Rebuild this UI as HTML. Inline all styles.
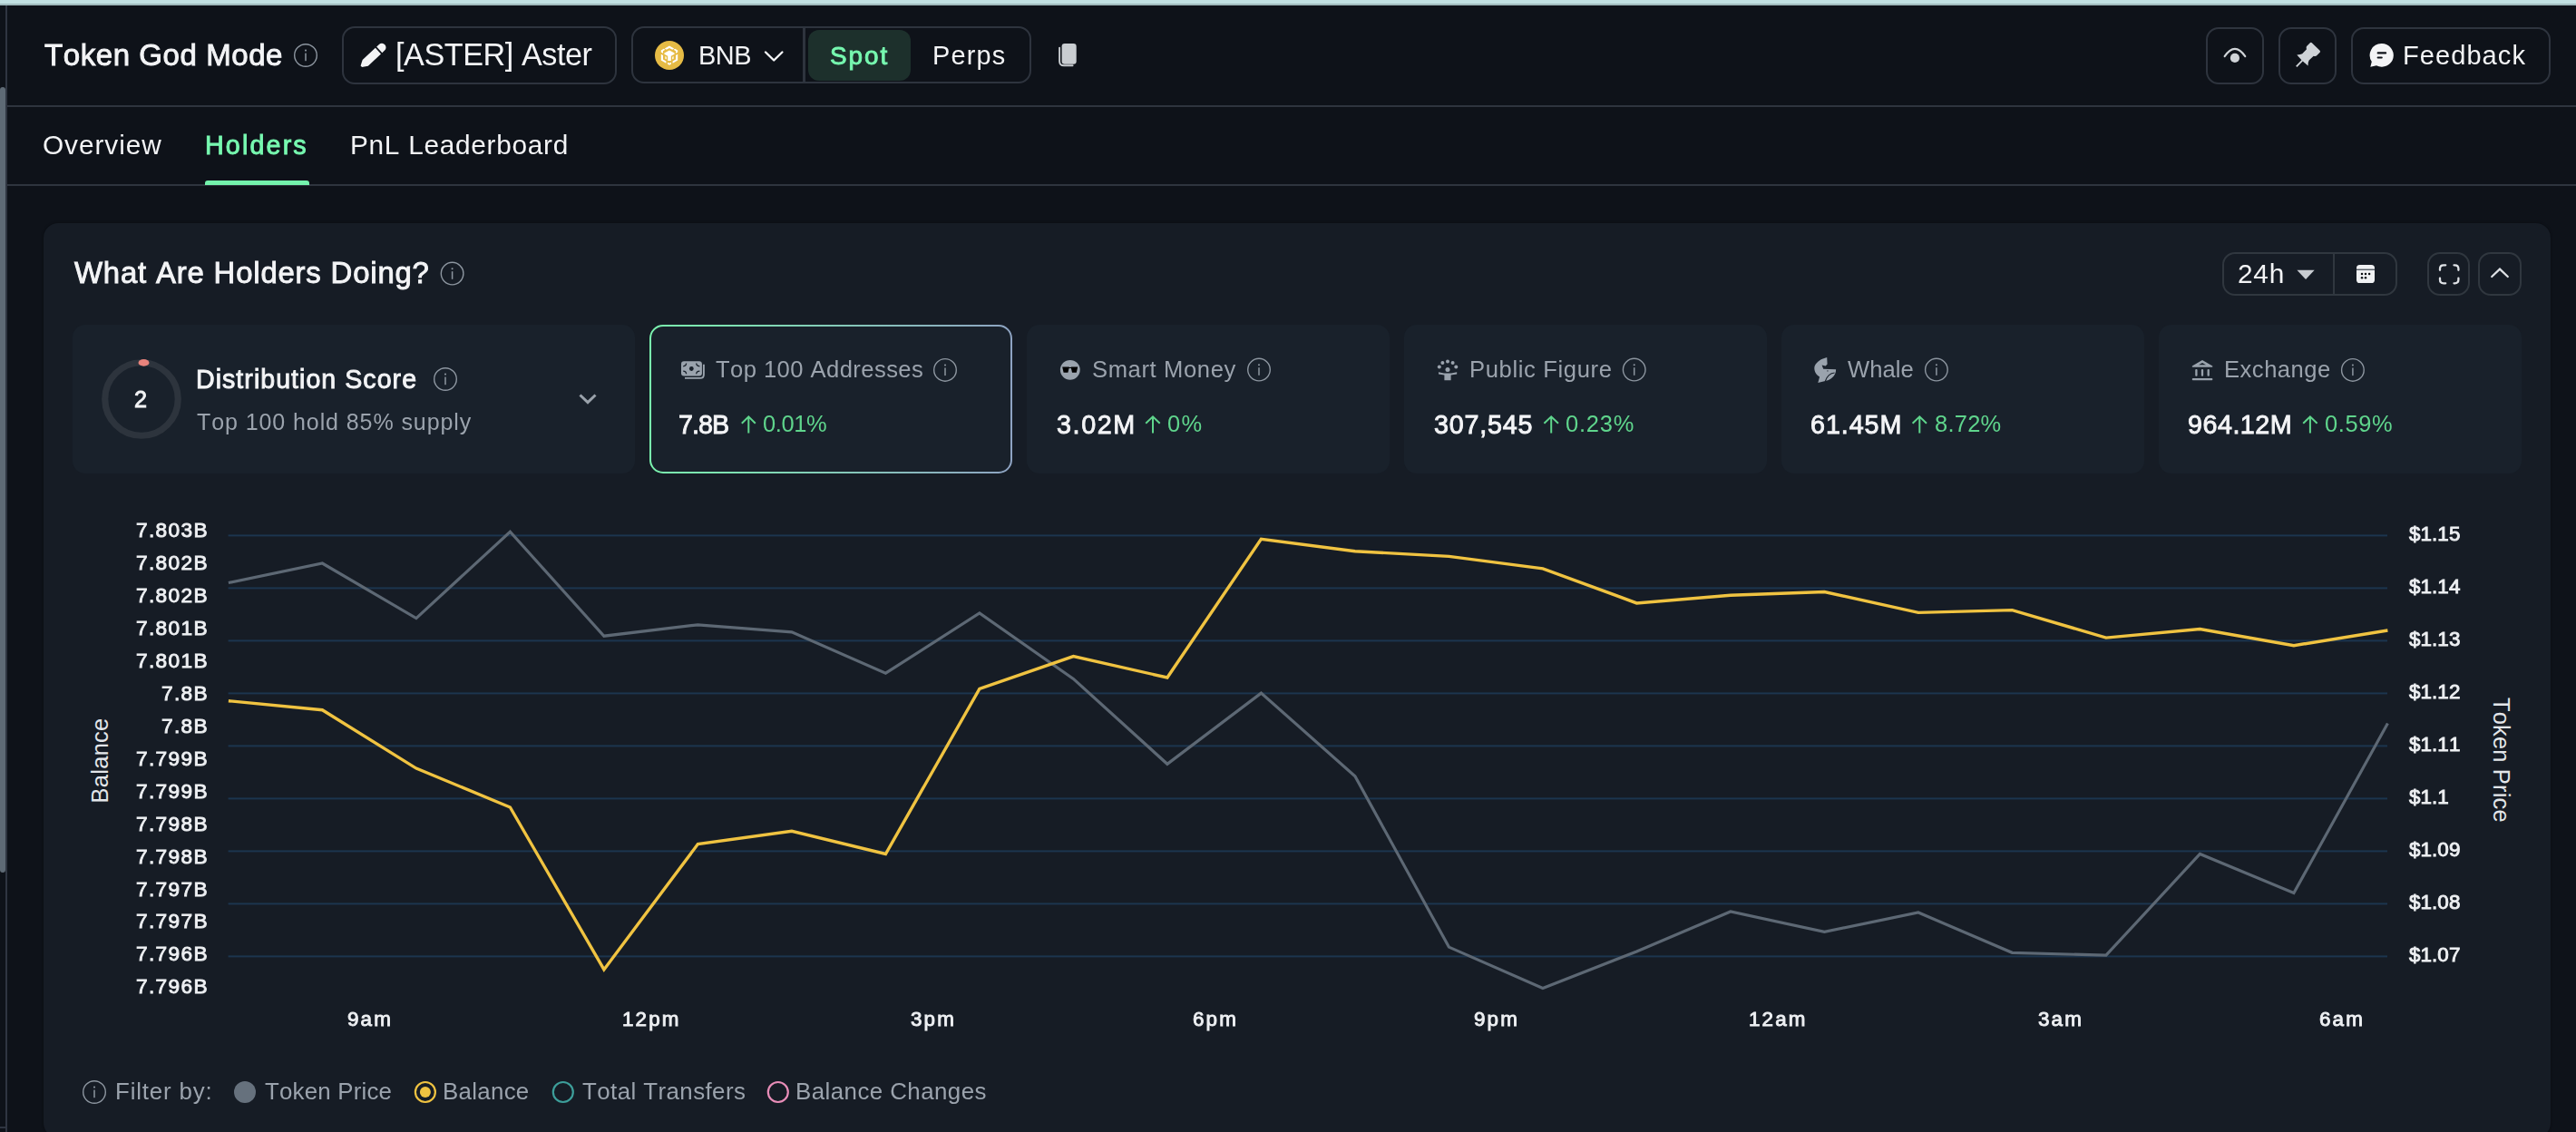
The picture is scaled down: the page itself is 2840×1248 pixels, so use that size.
<!DOCTYPE html>
<html><head><meta charset="utf-8"><style>
html,body{margin:0;padding:0;}
body{width:2840px;height:1248px;background:#0e1219;position:relative;overflow:hidden;font-family:'Liberation Sans',sans-serif;}
.t{position:absolute;white-space:nowrap;font-kerning:none;will-change:transform;font-family:'Liberation Sans',sans-serif;}
.a{position:absolute;box-sizing:border-box;}
</style></head><body>
<div class="a" style="left:0;top:0;width:2840px;height:4px;background:#c1e0e2"></div>
<div class="a" style="left:0;top:4px;width:2840px;height:1px;background:#9bb4b7"></div>
<div class="a" style="left:0;top:5px;width:2840px;height:1px;background:#a6c0c3"></div>
<div class="a" style="left:6px;top:6px;width:2px;height:1242px;background:#2f3541"></div>
<div class="a" style="left:0;top:1242px;width:6px;height:2px;background:#2f3541"></div>
<div class="a" style="left:0;top:96px;width:6px;height:866px;background:#5e6a75;border-radius:5px"></div>
<div class="a" style="left:8px;top:116px;width:2832px;height:2px;background:#2e343e"></div>
<div class="a" style="left:8px;top:203px;width:2832px;height:2px;background:#2e343e"></div>
<div class="a" style="left:225.5px;top:199px;width:115.5px;height:5px;background:#74f2ac;border-radius:3px 3px 0 0"></div>
<!-- header buttons -->
<div class="a" style="left:377px;top:29px;width:303px;height:64px;border:2px solid #2e343e;border-radius:14px"></div>
<div class="a" style="left:696px;top:29px;width:441px;height:63px;border:2px solid #2e343e;border-radius:14px"></div>
<div class="a" style="left:885px;top:31px;width:3px;height:59px;background:#2e343e"></div>
<div class="a" style="left:891px;top:33px;width:113px;height:56px;background:#1d302c;border-radius:12px"></div>
<div class="a" style="left:2432px;top:29.5px;width:64px;height:63px;border:2px solid #2e343e;border-radius:14px"></div>
<div class="a" style="left:2512px;top:29.5px;width:64px;height:63px;border:2px solid #2e343e;border-radius:14px"></div>
<div class="a" style="left:2592px;top:29.5px;width:220px;height:63px;border:2px solid #2e343e;border-radius:14px"></div>
<!-- main card -->
<div class="a" style="left:48px;top:246px;width:2764px;height:1008px;background:#161c25;border-radius:16px;box-shadow:0 0 3px rgba(0,0,0,0.4)"></div>
<div class="a" style="left:2450px;top:278.3px;width:193.4px;height:47.3px;border:2px solid #30373f;border-radius:14px"></div>
<div class="a" style="left:2572px;top:280px;width:2px;height:44px;background:#30373f"></div>
<div class="a" style="left:2676px;top:278.3px;width:47px;height:47.3px;border:2px solid #30373f;border-radius:14px"></div>
<div class="a" style="left:2732px;top:278.3px;width:47.5px;height:47.3px;border:2px solid #30373f;border-radius:14px"></div>
<!-- metric cards -->
<div class="a" style="left:80px;top:358px;width:620px;height:163.5px;background:#19212b;border-radius:14px"></div>
<div class="a" style="left:1132px;top:358px;width:400px;height:163.5px;background:#19212b;border-radius:14px"></div>
<div class="a" style="left:1548px;top:358px;width:400px;height:163.5px;background:#19212b;border-radius:14px"></div>
<div class="a" style="left:1964px;top:358px;width:400px;height:163.5px;background:#19212b;border-radius:14px"></div>
<div class="a" style="left:2380px;top:358px;width:400px;height:163.5px;background:#19212b;border-radius:14px"></div>
<svg class="a" style="left:0;top:0" width="2840" height="1248" viewBox="0 0 2840 1248">
<defs><linearGradient id="gb" x1="0" x2="1" y1="0" y2="0"><stop offset="0" stop-color="#7af3ae"/><stop offset="1" stop-color="#8ea3c2"/></linearGradient></defs>
<rect x="717" y="359" width="398" height="162" rx="14" fill="#19212b" stroke="url(#gb)" stroke-width="2"/>
<rect x="251.6" y="589.4" width="2380.4" height="2" fill="#1c354f"/><rect x="251.6" y="647.4" width="2380.4" height="2" fill="#1c354f"/><rect x="251.6" y="705.4" width="2380.4" height="2" fill="#1c354f"/><rect x="251.6" y="763.4" width="2380.4" height="2" fill="#1c354f"/><rect x="251.6" y="821.4" width="2380.4" height="2" fill="#1c354f"/><rect x="251.6" y="879.4" width="2380.4" height="2" fill="#1c354f"/><rect x="251.6" y="937.4" width="2380.4" height="2" fill="#1c354f"/><rect x="251.6" y="995.4" width="2380.4" height="2" fill="#1c354f"/><rect x="251.6" y="1053.4" width="2380.4" height="2" fill="#1c354f"/><polyline points="251.9,642.5 355.4,621.0 458.9,681.6 562.4,586.2 665.9,701.2 769.4,688.8 872.9,696.9 976.4,742.2 1079.9,675.9 1183.4,748.4 1286.9,842.3 1390.4,764.1 1493.9,855.7 1597.4,1044.1 1700.9,1089.4 1804.4,1048.9 1907.9,1005.0 2011.4,1027.4 2114.9,1006.0 2218.4,1050.3 2321.9,1053.2 2425.4,941.5 2528.9,984.5 2632.4,797.5" fill="none" stroke="#5d6874" stroke-width="3.2" stroke-linejoin="miter"/><polyline points="251.9,772.7 355.4,782.7 458.9,847.1 562.4,890.0 665.9,1068.9 769.4,930.6 872.9,916.3 976.4,941.5 1079.9,759.4 1183.4,723.6 1286.9,747.0 1390.4,594.4 1493.9,607.7 1597.4,613.4 1700.9,626.8 1804.4,664.9 1907.9,656.3 2011.4,652.5 2114.9,675.4 2218.4,672.6 2321.9,703.1 2425.4,693.5 2528.9,711.7 2632.4,695.0" fill="none" stroke="#f0c341" stroke-width="3.4" stroke-linejoin="miter"/><circle cx="337" cy="61" r="12.3" fill="none" stroke="#8d96a0" stroke-width="1.4"/><rect x="336.25" y="58.60" width="1.5" height="8.6" fill="#8d96a0"/><circle cx="337" cy="55.60" r="1.05" fill="#8d96a0"/><circle cx="498.6" cy="301.6" r="12.3" fill="none" stroke="#8d96a0" stroke-width="1.4"/><rect x="497.85" y="299.20" width="1.5" height="8.6" fill="#8d96a0"/><circle cx="498.6" cy="296.20" r="1.05" fill="#8d96a0"/><circle cx="491" cy="418" r="12.3" fill="none" stroke="#8d96a0" stroke-width="1.4"/><rect x="490.25" y="415.60" width="1.5" height="8.6" fill="#8d96a0"/><circle cx="491" cy="412.60" r="1.05" fill="#8d96a0"/><circle cx="1042" cy="407.9" r="12.3" fill="none" stroke="#8d96a0" stroke-width="1.4"/><rect x="1041.25" y="405.50" width="1.5" height="8.6" fill="#8d96a0"/><circle cx="1042" cy="402.50" r="1.05" fill="#8d96a0"/><circle cx="1388" cy="407.6" r="12.3" fill="none" stroke="#8d96a0" stroke-width="1.4"/><rect x="1387.25" y="405.20" width="1.5" height="8.6" fill="#8d96a0"/><circle cx="1388" cy="402.20" r="1.05" fill="#8d96a0"/><circle cx="1801.7" cy="407.6" r="12.3" fill="none" stroke="#8d96a0" stroke-width="1.4"/><rect x="1800.95" y="405.20" width="1.5" height="8.6" fill="#8d96a0"/><circle cx="1801.7" cy="402.20" r="1.05" fill="#8d96a0"/><circle cx="2134.9" cy="407.6" r="12.3" fill="none" stroke="#8d96a0" stroke-width="1.4"/><rect x="2134.15" y="405.20" width="1.5" height="8.6" fill="#8d96a0"/><circle cx="2134.9" cy="402.20" r="1.05" fill="#8d96a0"/><circle cx="2593.9" cy="407.9" r="12.3" fill="none" stroke="#8d96a0" stroke-width="1.4"/><rect x="2593.15" y="405.50" width="1.5" height="8.6" fill="#8d96a0"/><circle cx="2593.9" cy="402.50" r="1.05" fill="#8d96a0"/><circle cx="104" cy="1204" r="12.3" fill="none" stroke="#8d96a0" stroke-width="1.4"/><rect x="103.25" y="1201.60" width="1.5" height="8.6" fill="#8d96a0"/><circle cx="104" cy="1198.60" r="1.05" fill="#8d96a0"/><g transform="translate(398.2,73.6) rotate(-43)"><path d="M0.3,-1.2 L6.2,-4.5 L25.6,-4.5 L25.6,4.5 L6.2,4.5 L1.4,1.6 Q-0.2,0.6 0.3,-1.2 Z" fill="#f3f4f6"/><path d="M27.4,-4.5 L31.2,-4.5 A4.5,4.5 0 0 1 31.2,4.5 L27.4,4.5 Z" fill="#f3f4f6"/></g><circle cx="738" cy="61" r="16" fill="#e6bb45"/><g transform="translate(738,61)" fill="#ffffff"><path d="M-5.2,-7.4 L0,-10.4 L5.2,-7.4 L3.2,-6.2 L0,-8.0 L-3.2,-6.2 Z"/><path d="M-9.2,-5.6 L-6.2,-7.2 L-4.6,-6.2 L-7.0,-4.8 L-7.0,-2.2 L-9.2,-3.4 Z"/><path d="M9.2,-5.6 L6.2,-7.2 L4.6,-6.2 L7.0,-4.8 L7.0,-2.2 L9.2,-3.4 Z"/><path d="M-5.6,-2.6 L0,-5.6 L5.6,-2.6 L5.6,-1.2 L1.8,0.8 L1.8,6.0 L-1.8,6.0 L-1.8,0.8 L-5.6,-1.2 Z"/><path d="M-9.2,-1.2 L-7.0,0 L-7.0,4.6 L-3.6,6.6 L-3.6,8.8 L-9.2,5.6 Z"/><path d="M9.2,-1.2 L7.0,0 L7.0,4.6 L3.6,6.6 L3.6,8.8 L9.2,5.6 Z"/><path d="M-1.9,7.8 L0,8.8 L1.9,7.8 L1.9,9.8 L0,10.8 L-1.9,9.8 Z"/><path d="M-4.6,1.0 L-3.2,1.8 L-3.2,4.6 L-4.6,3.8 Z"/><path d="M4.6,1.0 L3.2,1.8 L3.2,4.6 L4.6,3.8 Z"/></g><path d="M844,57.5 L853.2,66.5 L862.4,57.5" fill="none" stroke="#f3f4f6" stroke-width="2.4" stroke-linecap="round" stroke-linejoin="round"/><rect x="1170.6" y="48" width="16.1" height="22.8" rx="3.2" fill="#c9cdd1"/><path d="M1168.1,52.6 L1168.1,67.5 Q1168.1,72.3 1173,72.3 L1182.6,72.3" fill="none" stroke="#c9cdd1" stroke-width="1.9" stroke-linecap="round"/><path d="M2452.6,62.2 Q2463.9,45.5 2475.3,62.2" fill="none" stroke="#d0d4d8" stroke-width="2.1" stroke-linecap="round"/><circle cx="2463.9" cy="63.9" r="5.1" fill="#d0d4d8"/><g transform="translate(2531.8,73.3) rotate(-45.6)" fill="#cfd3d7"><path d="M9.5,-8.6 Q12.5,-5.6 14.5,-5.2 L21.5,-5.4 Q22.6,-7.6 24.2,-7.6 L28.8,-7.6 Q30.6,-7.6 30.6,-5.8 L30.6,5.8 Q30.6,7.6 28.8,7.6 L24.2,7.6 Q22.6,7.6 21.5,5.4 L14.5,5.2 Q12.5,5.6 9.5,8.6 Q8.6,0 9.5,-8.6 Z"/><rect x="0" y="-0.95" width="10" height="1.9"/></g><path d="M2625.8,48.1 A12.8,12.8 0 1 1 2620,72.2 L2613.3,73.8 L2614.8,68 A12.8,12.8 0 0 1 2625.8,48.1 Z" fill="#f3f4f6"/><rect x="2620.6" y="57.3" width="10.6" height="2.2" rx="1.1" fill="#0e1219"/><rect x="2620.6" y="62.4" width="6.2" height="2.2" rx="1.1" fill="#0e1219"/><path d="M2532.4,297.8 L2551.7,297.8 L2542.05,308 Z" fill="#c8ccd1"/><rect x="2598" y="292" width="20" height="20" rx="3.6" fill="#f0f1f3"/><rect x="2598" y="296.6" width="20" height="1.3" fill="#4a5059"/><circle cx="2604" cy="302" r="1.25" fill="#0b0e12"/><circle cx="2608" cy="302" r="1.25" fill="#0b0e12"/><circle cx="2612.1" cy="302" r="1.25" fill="#0b0e12"/><circle cx="2604" cy="306.3" r="1.25" fill="#0b0e12"/><circle cx="2608" cy="306.3" r="1.25" fill="#0b0e12"/><path d="M2690,297.8 L2690,296.3 Q2690,292.3 2694,292.3 L2696.2,292.3 M2705.5,292.3 L2706.4,292.3 Q2710.4,292.3 2710.4,296.3 L2710.4,297.8 M2710.4,306.7 L2710.4,308.3 Q2710.4,312.3 2706.4,312.3 L2705.5,312.3 M2696.2,312.3 L2694,312.3 Q2690,312.3 2690,308.3 L2690,306.7" fill="none" stroke="#dfe2e6" stroke-width="2.3" stroke-linecap="round"/><path d="M2747.2,305 L2756,296.6 L2764.8,305" fill="none" stroke="#dfe2e6" stroke-width="2.2" stroke-linecap="round" stroke-linejoin="miter"/><circle cx="156" cy="440" r="40.25" fill="none" stroke="#2d343d" stroke-width="7.2"/><ellipse cx="158.5" cy="399.9" rx="6" ry="3.8" fill="#e8837c"/><path d="M639.5,435.5 L648,443.6 L656.5,435.5" fill="none" stroke="#9aa2ab" stroke-width="3" stroke-linecap="butt" stroke-linejoin="miter"/><rect x="751" y="398.2" width="22.9" height="16.4" rx="3" fill="#9aa3ad"/><circle cx="762.3" cy="406.5" r="2.4" fill="#19212b"/><path d="M756.6,400.6 Q756.6,403.6 753.2,403.8 M767.7,400.6 Q767.7,403.6 771.4,403.8 M756.6,412.3 Q756.6,409.2 753.2,409.1 M767.7,412.3 Q767.7,409.2 771.4,409.1" fill="none" stroke="#19212b" stroke-width="1.3"/><path d="M775.9,401.8 L775.9,413 Q775.9,416.9 772,416.9 L755,416.9" fill="none" stroke="#9aa3ad" stroke-width="1.9"/><circle cx="1179.8" cy="407.8" r="10.9" fill="#9aa3ad"/><path d="M1171.2,404.6 L1178.9,404.6 L1177.4,410.8 L1172.6,410.8 Z M1180.6,404.6 L1188.2,404.6 L1186.8,410.8 L1182,410.8 Z M1178.5,405 L1181,405 L1181,405.9 L1178.5,405.9 Z" fill="#000"/><circle cx="1586.8" cy="404.6" r="2.0" fill="#9aa3ad"/><circle cx="1590.4" cy="400.0" r="2.0" fill="#9aa3ad"/><circle cx="1596" cy="398.6" r="2.0" fill="#9aa3ad"/><circle cx="1601.6" cy="400.0" r="2.0" fill="#9aa3ad"/><circle cx="1605.3" cy="404.6" r="2.0" fill="#9aa3ad"/><circle cx="1596" cy="407.4" r="2.5" fill="#9aa3ad"/><path d="M1586,410.3 L1592,411.4 L1600,411.4 L1606.2,410.3 L1606.2,412.6 L1599.6,413.4 L1599.6,419.2 L1592.4,419.2 L1592.4,413.4 L1586,412.6 Z" fill="#9aa3ad"/><g transform="translate(1995,390)"><path d="M19.2,4 L19.6,11.6 L17.6,13.6 L13.6,12.4 L15.2,16.7 L29.1,17.2 C29.2,22.5 25.8,27.6 18.4,29.8 L9.3,31.9 L11.1,25.6 C6.2,22.4 4.6,17.6 5.6,13.8 C8,8.2 13,5.6 19.2,4 Z" fill="#9aa3ad"/><path d="M17.4,30.2 C19.5,24 22.5,21.4 27.6,21" fill="none" stroke="#19212b" stroke-width="1.2"/><rect x="19.2" y="18.2" width="1.4" height="1.4" fill="#4a525c"/></g><path d="M2428,397 L2439.3,403.4 Q2439.8,404.7 2438.4,404.7 L2417.7,404.7 Q2416.3,404.7 2416.8,403.4 Z" fill="#9aa3ad"/><path d="M2428,400 L2432,402.3 L2424,402.3 Z" fill="#19212b"/><rect x="2420.25" y="407.1" width="2.3" height="7.6" rx="1" fill="#9aa3ad"/><rect x="2426.85" y="407.1" width="2.3" height="7.6" rx="1" fill="#9aa3ad"/><rect x="2433.55" y="407.1" width="2.3" height="7.6" rx="1" fill="#9aa3ad"/><rect x="2416.8" y="417" width="22.5" height="2.3" rx="0.8" fill="#9aa3ad"/><path d="M825.3,477.5 L825.3,459.3 M817.8,466.8 L825.3,459.3 L832.8,466.8" fill="none" stroke="#5fd58c" stroke-width="2" stroke-linecap="butt" stroke-linejoin="miter"/><path d="M1271.0,477.5 L1271.0,459.3 M1263.2,466.8 L1271.0,459.3 L1278.7,466.8" fill="none" stroke="#5fd58c" stroke-width="2" stroke-linecap="butt" stroke-linejoin="miter"/><path d="M1710.2,477.5 L1710.2,459.3 M1702.4,466.8 L1710.2,459.3 L1718.0,466.8" fill="none" stroke="#5fd58c" stroke-width="2" stroke-linecap="butt" stroke-linejoin="miter"/><path d="M2116.3,477.5 L2116.3,459.3 M2108.6,466.8 L2116.3,459.3 L2124.0,466.8" fill="none" stroke="#5fd58c" stroke-width="2" stroke-linecap="butt" stroke-linejoin="miter"/><path d="M2546.9,477.5 L2546.9,459.3 M2539.2,466.8 L2546.9,459.3 L2554.6,466.8" fill="none" stroke="#5fd58c" stroke-width="2" stroke-linecap="butt" stroke-linejoin="miter"/><circle cx="270" cy="1204" r="12" fill="#66717d"/><circle cx="468.9" cy="1204" r="11" fill="none" stroke="#f0c341" stroke-width="2.2"/><circle cx="468.9" cy="1204" r="6" fill="#f0c341"/><circle cx="620.8" cy="1204" r="11" fill="none" stroke="#3d9e9a" stroke-width="2.2"/><circle cx="857.8" cy="1204" r="11" fill="none" stroke="#e88db8" stroke-width="2.2"/><text transform="translate(118.8,885.4) rotate(-90)" font-family="Liberation Sans" font-size="25.44" letter-spacing="0.283" fill="#e3e6ea" style="font-kerning:none">Balance</text><text transform="translate(2748.7,768.9) rotate(90)" font-family="Liberation Sans" font-size="25.44" letter-spacing="0.200" fill="#e3e6ea" style="font-kerning:none">Token Price</text>
</svg>
<div class="t" style="left:49.30px;top:44.00px;font-size:33.05px;line-height:33.05px;font-weight:400;-webkit-text-stroke:0.900px #f3f4f6;letter-spacing:0.546px;color:#f3f4f6">Token God Mode</div><div class="t" style="left:435.60px;top:43.00px;font-size:34.16px;line-height:34.16px;font-weight:400;letter-spacing:-0.425px;color:#f3f4f6">[ASTER] Aster</div><div class="t" style="left:769.90px;top:47.00px;font-size:28.92px;line-height:28.92px;font-weight:400;letter-spacing:-0.450px;color:#f3f4f6">BNB</div><div class="t" style="left:915.40px;top:48.00px;font-size:27.87px;line-height:27.87px;font-weight:400;-webkit-text-stroke:0.900px #77f8b0;letter-spacing:2.000px;color:#77f8b0">Spot</div><div class="t" style="left:1027.70px;top:47.00px;font-size:28.92px;line-height:28.92px;font-weight:400;letter-spacing:1.200px;color:#f3f4f6">Perps</div><div class="t" style="left:2649.00px;top:47.00px;font-size:29.07px;line-height:29.07px;font-weight:400;letter-spacing:1.043px;color:#f3f4f6">Feedback</div><div class="t" style="left:47.40px;top:145.00px;font-size:29.80px;line-height:29.80px;font-weight:400;letter-spacing:0.943px;color:#f3f4f6">Overview</div><div class="t" style="left:226.00px;top:146.00px;font-size:28.71px;line-height:28.71px;font-weight:400;-webkit-text-stroke:0.900px #77f8b0;letter-spacing:2.133px;color:#77f8b0">Holders</div><div class="t" style="left:386.00px;top:145.00px;font-size:29.80px;line-height:29.80px;font-weight:400;letter-spacing:0.714px;color:#f3f4f6">PnL Leaderboard</div><div class="t" style="left:82.00px;top:285.00px;font-size:32.91px;line-height:32.91px;font-weight:400;-webkit-text-stroke:0.900px #f3f4f6;letter-spacing:0.809px;color:#f3f4f6">What Are Holders Doing?</div><div class="t" style="left:2466.50px;top:287.00px;font-size:29.80px;line-height:29.80px;font-weight:400;letter-spacing:0.800px;color:#f3f4f6">24h</div><div class="t" style="left:148.40px;top:428.00px;font-size:25.21px;line-height:25.21px;font-weight:400;-webkit-text-stroke:0.900px #f3f4f6;letter-spacing:0.000px;color:#f3f4f6">2</div><div class="t" style="left:215.80px;top:404.00px;font-size:28.57px;line-height:28.57px;font-weight:400;-webkit-text-stroke:0.900px #f3f4f6;letter-spacing:1.035px;color:#f3f4f6">Distribution Score</div><div class="t" style="left:216.80px;top:453.00px;font-size:25.00px;line-height:25.00px;font-weight:400;letter-spacing:0.914px;color:#9ba3ad">Top 100 hold 85% supply</div><div class="t" style="left:789.00px;top:395.00px;font-size:25.58px;line-height:25.58px;font-weight:400;letter-spacing:0.438px;color:#9ba3ad">Top 100 Addresses</div><div class="t" style="left:747.60px;top:454.00px;font-size:28.71px;line-height:28.71px;font-weight:400;-webkit-text-stroke:0.900px #f3f4f6;letter-spacing:-1.000px;color:#f3f4f6">7.8B</div><div class="t" style="left:841.00px;top:455.00px;font-size:25.44px;line-height:25.44px;font-weight:400;letter-spacing:-0.350px;color:#5fd58c">0.01%</div><div class="t" style="left:1204.30px;top:395.00px;font-size:25.58px;line-height:25.58px;font-weight:400;letter-spacing:0.620px;color:#9ba3ad">Smart Money</div><div class="t" style="left:1165.10px;top:454.00px;font-size:28.71px;line-height:28.71px;font-weight:400;-webkit-text-stroke:0.900px #f3f4f6;letter-spacing:1.625px;color:#f3f4f6">3.02M</div><div class="t" style="left:1287.00px;top:455.00px;font-size:25.44px;line-height:25.44px;font-weight:400;letter-spacing:1.300px;color:#5fd58c">0%</div><div class="t" style="left:1619.80px;top:395.00px;font-size:25.58px;line-height:25.58px;font-weight:400;letter-spacing:0.633px;color:#9ba3ad">Public Figure</div><div class="t" style="left:1581.00px;top:454.00px;font-size:28.71px;line-height:28.71px;font-weight:400;-webkit-text-stroke:0.900px #f3f4f6;letter-spacing:0.800px;color:#f3f4f6">307,545</div><div class="t" style="left:1726.00px;top:455.00px;font-size:25.44px;line-height:25.44px;font-weight:400;letter-spacing:0.800px;color:#5fd58c">0.23%</div><div class="t" style="left:2037.00px;top:395.00px;font-size:25.58px;line-height:25.58px;font-weight:400;letter-spacing:0.075px;color:#9ba3ad">Whale</div><div class="t" style="left:1996.00px;top:454.00px;font-size:28.71px;line-height:28.71px;font-weight:400;-webkit-text-stroke:0.900px #f3f4f6;letter-spacing:0.940px;color:#f3f4f6">61.45M</div><div class="t" style="left:2132.50px;top:455.00px;font-size:25.44px;line-height:25.44px;font-weight:400;letter-spacing:0.275px;color:#5fd58c">8.72%</div><div class="t" style="left:2451.50px;top:395.00px;font-size:25.58px;line-height:25.58px;font-weight:400;letter-spacing:0.500px;color:#9ba3ad">Exchange</div><div class="t" style="left:2412.40px;top:454.00px;font-size:28.71px;line-height:28.71px;font-weight:400;-webkit-text-stroke:0.900px #f3f4f6;letter-spacing:0.500px;color:#f3f4f6">964.12M</div><div class="t" style="left:2563.20px;top:455.00px;font-size:25.44px;line-height:25.44px;font-weight:400;letter-spacing:0.600px;color:#5fd58c">0.59%</div><div class="t" style="left:127.40px;top:1191.00px;font-size:25.87px;line-height:25.87px;font-weight:400;letter-spacing:0.844px;color:#9ba3ad">Filter by:</div><div class="t" style="left:292.00px;top:1191.00px;font-size:25.87px;line-height:25.87px;font-weight:400;letter-spacing:0.200px;color:#9ba3ad">Token Price</div><div class="t" style="left:487.80px;top:1191.00px;font-size:25.87px;line-height:25.87px;font-weight:400;letter-spacing:0.300px;color:#9ba3ad">Balance</div><div class="t" style="left:641.50px;top:1191.00px;font-size:25.87px;line-height:25.87px;font-weight:400;letter-spacing:0.429px;color:#9ba3ad">Total Transfers</div><div class="t" style="left:876.50px;top:1191.00px;font-size:25.87px;line-height:25.87px;font-weight:400;letter-spacing:0.450px;color:#9ba3ad">Balance Changes</div><div class="t" style="left:149.80px;top:573.00px;font-size:22.69px;line-height:22.69px;font-weight:400;-webkit-text-stroke:0.900px #eef0f3;letter-spacing:1.340px;color:#eef0f3">7.803B</div><div class="t" style="left:149.80px;top:609.00px;font-size:22.69px;line-height:22.69px;font-weight:400;-webkit-text-stroke:0.900px #eef0f3;letter-spacing:1.340px;color:#eef0f3">7.802B</div><div class="t" style="left:149.80px;top:645.00px;font-size:22.69px;line-height:22.69px;font-weight:400;-webkit-text-stroke:0.900px #eef0f3;letter-spacing:1.340px;color:#eef0f3">7.802B</div><div class="t" style="left:149.80px;top:681.00px;font-size:22.69px;line-height:22.69px;font-weight:400;-webkit-text-stroke:0.900px #eef0f3;letter-spacing:1.340px;color:#eef0f3">7.801B</div><div class="t" style="left:149.80px;top:717.00px;font-size:22.69px;line-height:22.69px;font-weight:400;-webkit-text-stroke:0.900px #eef0f3;letter-spacing:1.340px;color:#eef0f3">7.801B</div><div class="t" style="left:178.48px;top:753.00px;font-size:22.69px;line-height:22.69px;font-weight:400;-webkit-text-stroke:0.900px #eef0f3;letter-spacing:1.340px;color:#eef0f3">7.8B</div><div class="t" style="left:178.48px;top:789.00px;font-size:22.69px;line-height:22.69px;font-weight:400;-webkit-text-stroke:0.900px #eef0f3;letter-spacing:1.340px;color:#eef0f3">7.8B</div><div class="t" style="left:149.80px;top:825.00px;font-size:22.69px;line-height:22.69px;font-weight:400;-webkit-text-stroke:0.900px #eef0f3;letter-spacing:1.340px;color:#eef0f3">7.799B</div><div class="t" style="left:149.80px;top:861.00px;font-size:22.69px;line-height:22.69px;font-weight:400;-webkit-text-stroke:0.900px #eef0f3;letter-spacing:1.340px;color:#eef0f3">7.799B</div><div class="t" style="left:149.80px;top:897.00px;font-size:22.69px;line-height:22.69px;font-weight:400;-webkit-text-stroke:0.900px #eef0f3;letter-spacing:1.340px;color:#eef0f3">7.798B</div><div class="t" style="left:149.80px;top:933.00px;font-size:22.69px;line-height:22.69px;font-weight:400;-webkit-text-stroke:0.900px #eef0f3;letter-spacing:1.340px;color:#eef0f3">7.798B</div><div class="t" style="left:149.80px;top:969.00px;font-size:22.69px;line-height:22.69px;font-weight:400;-webkit-text-stroke:0.900px #eef0f3;letter-spacing:1.340px;color:#eef0f3">7.797B</div><div class="t" style="left:149.80px;top:1004.00px;font-size:22.69px;line-height:22.69px;font-weight:400;-webkit-text-stroke:0.900px #eef0f3;letter-spacing:1.340px;color:#eef0f3">7.797B</div><div class="t" style="left:149.80px;top:1040.00px;font-size:22.69px;line-height:22.69px;font-weight:400;-webkit-text-stroke:0.900px #eef0f3;letter-spacing:1.340px;color:#eef0f3">7.796B</div><div class="t" style="left:149.80px;top:1076.00px;font-size:22.69px;line-height:22.69px;font-weight:400;-webkit-text-stroke:0.900px #eef0f3;letter-spacing:1.340px;color:#eef0f3">7.796B</div><div class="t" style="left:2655.90px;top:578.00px;font-size:22.41px;line-height:22.41px;font-weight:400;-webkit-text-stroke:0.900px #eef0f3;letter-spacing:0.075px;color:#eef0f3">$1.15</div><div class="t" style="left:2655.90px;top:636.00px;font-size:22.41px;line-height:22.41px;font-weight:400;-webkit-text-stroke:0.900px #eef0f3;letter-spacing:0.075px;color:#eef0f3">$1.14</div><div class="t" style="left:2655.90px;top:694.00px;font-size:22.41px;line-height:22.41px;font-weight:400;-webkit-text-stroke:0.900px #eef0f3;letter-spacing:0.075px;color:#eef0f3">$1.13</div><div class="t" style="left:2655.90px;top:752.00px;font-size:22.41px;line-height:22.41px;font-weight:400;-webkit-text-stroke:0.900px #eef0f3;letter-spacing:0.075px;color:#eef0f3">$1.12</div><div class="t" style="left:2655.90px;top:810.00px;font-size:22.41px;line-height:22.41px;font-weight:400;-webkit-text-stroke:0.900px #eef0f3;letter-spacing:0.075px;color:#eef0f3">$1.11</div><div class="t" style="left:2655.90px;top:868.00px;font-size:22.41px;line-height:22.41px;font-weight:400;-webkit-text-stroke:0.900px #eef0f3;letter-spacing:0.075px;color:#eef0f3">$1.1</div><div class="t" style="left:2655.90px;top:926.00px;font-size:22.41px;line-height:22.41px;font-weight:400;-webkit-text-stroke:0.900px #eef0f3;letter-spacing:0.075px;color:#eef0f3">$1.09</div><div class="t" style="left:2655.90px;top:984.00px;font-size:22.41px;line-height:22.41px;font-weight:400;-webkit-text-stroke:0.900px #eef0f3;letter-spacing:0.075px;color:#eef0f3">$1.08</div><div class="t" style="left:2655.90px;top:1042.00px;font-size:22.41px;line-height:22.41px;font-weight:400;-webkit-text-stroke:0.900px #eef0f3;letter-spacing:0.075px;color:#eef0f3">$1.07</div><div class="t" style="left:383.00px;top:1113.00px;font-size:22.41px;line-height:22.41px;font-weight:400;-webkit-text-stroke:0.900px #eef0f3;letter-spacing:2.150px;color:#eef0f3">9am</div><div class="t" style="left:686.02px;top:1113.00px;font-size:22.41px;line-height:22.41px;font-weight:400;-webkit-text-stroke:0.900px #eef0f3;letter-spacing:2.150px;color:#eef0f3">12pm</div><div class="t" style="left:1004.20px;top:1113.00px;font-size:22.41px;line-height:22.41px;font-weight:400;-webkit-text-stroke:0.900px #eef0f3;letter-spacing:2.150px;color:#eef0f3">3pm</div><div class="t" style="left:1314.80px;top:1113.00px;font-size:22.41px;line-height:22.41px;font-weight:400;-webkit-text-stroke:0.900px #eef0f3;letter-spacing:2.150px;color:#eef0f3">6pm</div><div class="t" style="left:1625.40px;top:1113.00px;font-size:22.41px;line-height:22.41px;font-weight:400;-webkit-text-stroke:0.900px #eef0f3;letter-spacing:2.150px;color:#eef0f3">9pm</div><div class="t" style="left:1928.43px;top:1113.00px;font-size:22.41px;line-height:22.41px;font-weight:400;-webkit-text-stroke:0.900px #eef0f3;letter-spacing:2.150px;color:#eef0f3">12am</div><div class="t" style="left:2246.60px;top:1113.00px;font-size:22.41px;line-height:22.41px;font-weight:400;-webkit-text-stroke:0.900px #eef0f3;letter-spacing:2.150px;color:#eef0f3">3am</div><div class="t" style="left:2557.20px;top:1113.00px;font-size:22.41px;line-height:22.41px;font-weight:400;-webkit-text-stroke:0.900px #eef0f3;letter-spacing:2.150px;color:#eef0f3">6am</div>
</body></html>
